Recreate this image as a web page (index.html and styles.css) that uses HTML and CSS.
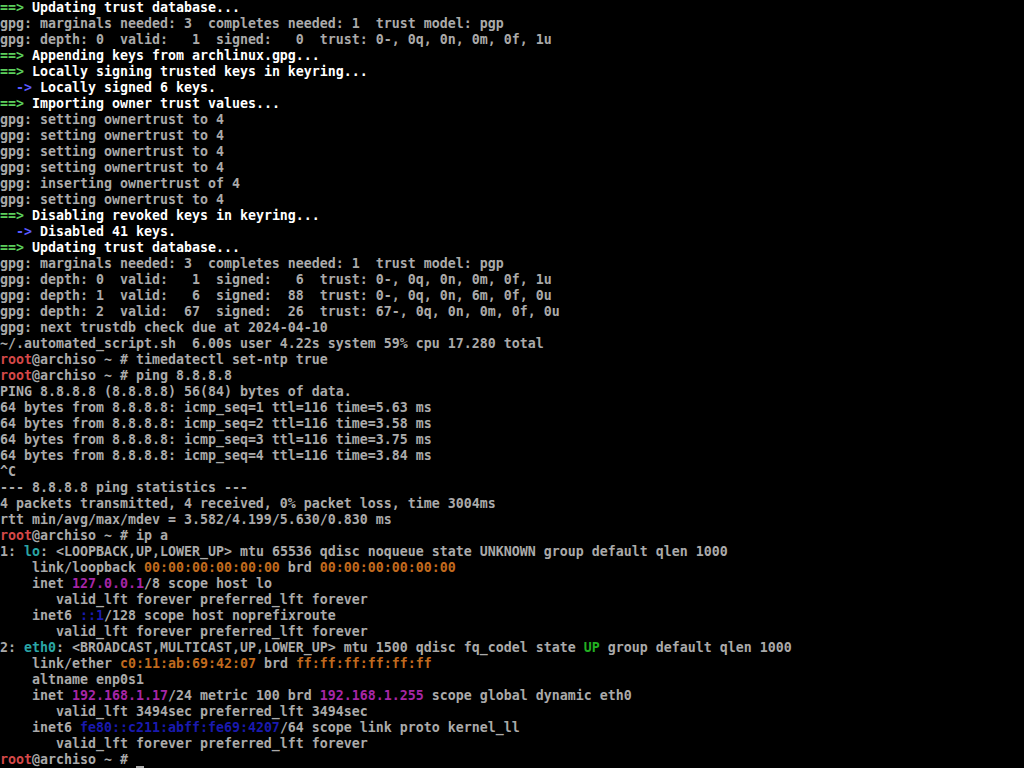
FILE: index.html
```html
<!DOCTYPE html>
<html>
<head>
<meta charset="utf-8">
<link rel="stylesheet" href="styles.css">
</head>
<body>
<div class="console">
<div class="ln"><span class="g">==&gt;</span><span class="w"> Updating trust database...</span></div>
<div class="ln">gpg: marginals needed: 3  completes needed: 1  trust model: pgp</div>
<div class="ln">gpg: depth: 0  valid:   1  signed:   0  trust: 0-, 0q, 0n, 0m, 0f, 1u</div>
<div class="ln"><span class="g">==&gt;</span><span class="w"> Appending keys from archlinux.gpg...</span></div>
<div class="ln"><span class="g">==&gt;</span><span class="w"> Locally signing trusted keys in keyring...</span></div>
<div class="ln">  <span class="b">-&gt;</span><span class="w"> Locally signed 6 keys.</span></div>
<div class="ln"><span class="g">==&gt;</span><span class="w"> Importing owner trust values...</span></div>
<div class="ln">gpg: setting ownertrust to 4</div>
<div class="ln">gpg: setting ownertrust to 4</div>
<div class="ln">gpg: setting ownertrust to 4</div>
<div class="ln">gpg: setting ownertrust to 4</div>
<div class="ln">gpg: inserting ownertrust of 4</div>
<div class="ln">gpg: setting ownertrust to 4</div>
<div class="ln"><span class="g">==&gt;</span><span class="w"> Disabling revoked keys in keyring...</span></div>
<div class="ln">  <span class="b">-&gt;</span><span class="w"> Disabled 41 keys.</span></div>
<div class="ln"><span class="g">==&gt;</span><span class="w"> Updating trust database...</span></div>
<div class="ln">gpg: marginals needed: 3  completes needed: 1  trust model: pgp</div>
<div class="ln">gpg: depth: 0  valid:   1  signed:   6  trust: 0-, 0q, 0n, 0m, 0f, 1u</div>
<div class="ln">gpg: depth: 1  valid:   6  signed:  88  trust: 0-, 0q, 0n, 6m, 0f, 0u</div>
<div class="ln">gpg: depth: 2  valid:  67  signed:  26  trust: 67-, 0q, 0n, 0m, 0f, 0u</div>
<div class="ln">gpg: next trustdb check due at 2024-04-10</div>
<div class="ln">~/.automated_script.sh  6.00s user 4.22s system 59% cpu 17.280 total</div>
<div class="ln"><span class="r">root</span>@archiso ~ # timedatectl set-ntp true</div>
<div class="ln"><span class="r">root</span>@archiso ~ # ping 8.8.8.8</div>
<div class="ln">PING 8.8.8.8 (8.8.8.8) 56(84) bytes of data.</div>
<div class="ln">64 bytes from 8.8.8.8: icmp_seq=1 ttl=116 time=5.63 ms</div>
<div class="ln">64 bytes from 8.8.8.8: icmp_seq=2 ttl=116 time=3.58 ms</div>
<div class="ln">64 bytes from 8.8.8.8: icmp_seq=3 ttl=116 time=3.75 ms</div>
<div class="ln">64 bytes from 8.8.8.8: icmp_seq=4 ttl=116 time=3.84 ms</div>
<div class="ln">^C</div>
<div class="ln">--- 8.8.8.8 ping statistics ---</div>
<div class="ln">4 packets transmitted, 4 received, 0% packet loss, time 3004ms</div>
<div class="ln">rtt min/avg/max/mdev = 3.582/4.199/5.630/0.830 ms</div>
<div class="ln"><span class="r">root</span>@archiso ~ # ip a</div>
<div class="ln">1: <span class="c">lo</span>: &lt;LOOPBACK,UP,LOWER_UP&gt; mtu 65536 qdisc noqueue state UNKNOWN group default qlen 1000</div>
<div class="ln">    link/loopback <span class="o">00:00:00:00:00:00</span> brd <span class="o">00:00:00:00:00:00</span></div>
<div class="ln">    inet <span class="m">127.0.0.1</span>/8 scope host lo</div>
<div class="ln">       valid_lft forever preferred_lft forever</div>
<div class="ln">    inet6 <span class="db">::1</span>/128 scope host noprefixroute</div>
<div class="ln">       valid_lft forever preferred_lft forever</div>
<div class="ln">2: <span class="c">eth0</span>: &lt;BROADCAST,MULTICAST,UP,LOWER_UP&gt; mtu 1500 qdisc fq_codel state <span class="gr">UP</span> group default qlen 1000</div>
<div class="ln">    link/ether <span class="o">c0:11:ab:69:42:07</span> brd <span class="o">ff:ff:ff:ff:ff:ff</span></div>
<div class="ln">    altname enp0s1</div>
<div class="ln">    inet <span class="m">192.168.1.17</span>/24 metric 100 brd <span class="m">192.168.1.255</span> scope global dynamic eth0</div>
<div class="ln">       valid_lft 3494sec preferred_lft 3494sec</div>
<div class="ln">    inet6 <span class="db">fe80::c211:abff:fe69:4207</span>/64 scope link proto kernel_ll</div>
<div class="ln">       valid_lft forever preferred_lft forever</div>
<div class="ln"><span class="r">root</span>@archiso ~ # <span class="cursor"> </span></div>
</div>
</body>
</html>
```
FILE: styles.css
```css
html, body {
  margin: 0;
  padding: 0;
  background: #000;
}
.console {
  width: 1024px;
  height: 768px;
  overflow: hidden;
  font-family: "DejaVu Sans Mono", "Liberation Mono", monospace;
  font-size: 13.29px;
  font-weight: bold;
  line-height: 16px;
  color: #aaaaaa;
}
.ln {
  height: 16px;
  white-space: pre;
}
.g { color: #5ccf5c; }
.w { color: #ffffff; }
.b { color: #5a5aff; }
.r { color: #d44848; }
.c { color: #2aa6a6; }
.o { color: #c06a1e; }
.m { color: #a626a6; }
.db { color: #1a1ab0; }
.gr { color: #22b022; }
.cursor {
  display: inline-block;
  width: 8px;
  height: 16px;
  vertical-align: top;
  box-shadow: inset 0 -2px 0 #aaaaaa;
}
```
